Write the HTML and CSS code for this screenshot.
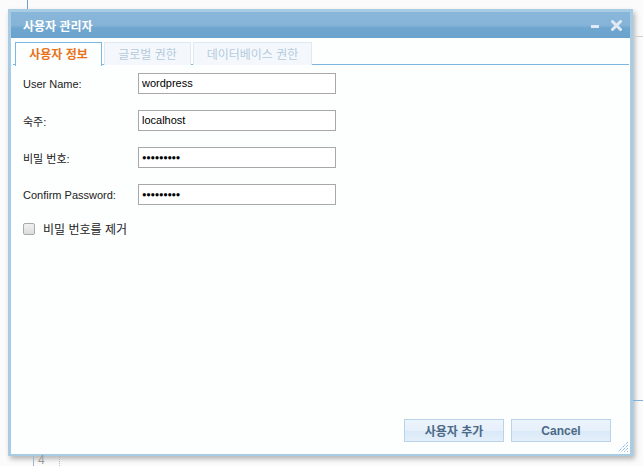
FILE: index.html
```html
<!DOCTYPE html>
<html lang="ko">
  <head>
    <meta charset="UTF-8" />
    <title>사용자 관리자</title>
    <link rel="stylesheet" href="styles.css">
  </head>
  <body>
    <div class="bg-line bg-v1"></div>
    <div class="bg-line bg-v2"></div>
    <div class="bg-dots"></div>
    <div class="bg-num">4</div>
    <div class="bg-h bg-h1"></div>
    <div class="bg-h bg-h2"></div>

    <div class="window">
      <div class="titlebar">
        <span class="title">사용자 관리자</span>
        <div class="tools">
          <span class="tool-min"></span>
          <svg class="tool-close" width="11" height="11" viewBox="0 0 11 11">
            <path d="M1.5 1.5 L9.5 9.5 M9.5 1.5 L1.5 9.5" stroke="#dfeaf5" stroke-width="3" stroke-linecap="round"/>
          </svg>
        </div>
      </div>
      <div class="body">
        <div class="tabs">
          <div class="tab active">사용자 정보</div>
          <div class="tab">글로벌 권한</div>
          <div class="tab wide">데이터베이스 권한</div>
        </div>
        <div class="form">
          <div class="row">
            <label>User Name:</label>
            <div class="field">wordpress</div>
          </div>
          <div class="row">
            <label>숙주:</label>
            <div class="field">localhost</div>
          </div>
          <div class="row">
            <label>비밀 번호:</label>
            <div class="field pw">●●●●●●●●●</div>
          </div>
          <div class="row">
            <label>Confirm Password:</label>
            <div class="field pw">●●●●●●●●●</div>
          </div>
          <div class="check">
            <span class="box"></span>
            <span>비밀 번호를 제거</span>
          </div>
        </div>
        <div class="buttons">
          <button class="btn">사용자 추가</button>
          <button class="btn">Cancel</button>
        </div>
        <svg class="grip" width="12" height="12" viewBox="0 0 12 12">
          <path d="M11 1 L1 11 M11 4 L4 11 M11 7 L7 11 M11 10 L10 11" stroke="#5a9ad3" stroke-width="1" stroke-dasharray="1 1"/>
        </svg>
      </div>
    </div>
  </body>
</html>
```

FILE: styles.css
```css
*{
    margin: 0;
    padding: 0;
    box-sizing: border-box;
}

body{
    width: 643px;
    height: 466px;
    background-color: #fbfbfb;
    font-family: "Liberation Sans", "Noto Sans CJK KR", sans-serif;
    font-size: 11px;
    color: #222;
    position: relative;
    overflow: hidden;
    padding: 9px 0 0 8px;
}

.bg-line{
    position: absolute;
    width: 1px;
    background-color: #6b9fd0;
}
.bg-v1{ left: 27px; top: 0; height: 9px; }
.bg-v2{ left: 33px; top: 456px; height: 10px; background-color: #9ab6d3; }
.bg-dots{
    position: absolute;
    left: 59px;
    top: 456px;
    height: 10px;
    border-left: 1px dotted #bbb;
}
.bg-num{
    position: absolute;
    left: 38px;
    top: 453px;
    font-size: 12px;
    color: #999;
}
.bg-h{
    position: absolute;
    left: 633px;
    width: 10px;
    height: 1px;
    background-color: #cfcfcf;
}
.bg-h1{ top: 36px; }
.bg-h2{ top: 400px; background-color: #7fb2e0; }

.window{
    width: 625px;
    height: 447px;
    border: 3px solid #a9cce5;
    border-bottom-width: 2px;
    background-color: #a9cce5;
    box-shadow: 2px 3px 5px rgba(0, 0, 0, 0.28);
    display: flex;
    flex-direction: column;
}

.titlebar{
    height: 26px;
    background: linear-gradient(to bottom, #89b7da 0%, #86b4d8 50%, #6fa6cf 62%, #6ba3cd 100%);
    display: flex;
    align-items: center;
    justify-content: space-between;
    padding: 0 8px 0 12px;
}

.title{
    color: #fff;
    font-family: "Noto Sans CJK KR", sans-serif;
    font-weight: bold;
    font-size: 12px;
}

.tools{
    display: flex;
    align-items: center;
    gap: 12px;
}
.tool-min{
    width: 8px;
    height: 3px;
    background-color: #dfeaf5;
    margin-top: 2px;
}

.body{
    flex: 1;
    background-color: #fdfefe;
    position: relative;
    display: flex;
    flex-direction: column;
}

.tabs{
    display: flex;
    gap: 2px;
    margin: 4px 1px 0 2px;
    padding-left: 2px;
    height: 23px;
    border-bottom: 1px solid #7db6e0;
}

.tab{
    width: 87px;
    height: 23px;
    border: 1px solid #dde9f3;
    border-bottom: none;
    background-color: #f4f8fc;
    color: #b5cadd;
    font-family: "Noto Sans CJK KR", sans-serif;
    font-size: 12px;
    text-align: center;
    line-height: 21px;
}
.tab.wide{
    width: 119px;
}
.tab.active{
    height: 24px;
    border-color: #7db6e0;
    background-color: #fdfefe;
    color: #e8731b;
    font-weight: bold;
}

.form{
    padding: 8px 0 0 12px;
    flex: 1;
}

.row{
    display: flex;
    align-items: center;
    height: 21px;
    margin-bottom: 16px;
}

.row label{
    width: 115px;
    color: #222;
}

.field{
    width: 198px;
    height: 21px;
    border: 1px solid #a8a8a8;
    background-color: #fff;
    padding-left: 3px;
    line-height: 19px;
    font-size: 11px;
    color: #000;
}
.field.pw{
    font-size: 7.5px;
    letter-spacing: -0.3px;
}

.check{
    display: flex;
    align-items: center;
    gap: 8px;
    margin-top: -1px;
    font-family: "Noto Sans CJK KR", sans-serif;
    font-size: 12px;
}
.box{
    width: 12px;
    height: 12px;
    border: 1px solid #aaa;
    border-radius: 2px;
    background: linear-gradient(to bottom, #f1f1f1, #dcdcdc);
}

.buttons{
    display: flex;
    justify-content: flex-end;
    gap: 7px;
    padding: 0 19px 12px 0;
}

.btn{
    width: 100px;
    height: 23px;
    border: 1px solid #b8d3ea;
    background: linear-gradient(to bottom, #ecf4fc 0%, #e6f0fa 50%, #d9e9f8 52%, #e4effa 100%);
    color: #4c6986;
    font-family: "Liberation Sans", "Noto Sans CJK KR", sans-serif;
    font-weight: bold;
    font-size: 12px;
}

.grip{
    position: absolute;
    right: 1px;
    bottom: 1px;
}
```
